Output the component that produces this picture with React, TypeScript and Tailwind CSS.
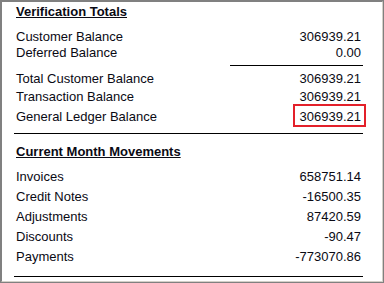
import type { FC } from "react";

const Row: FC<{ label: string; value: string; className?: string }> = ({ label, value, className = "" }) => (
    <div className={`flex h-[16px] leading-[16px] ${className}`}>
        <span className="flex-1 pl-[2px]">{label}</span>
        <span className="pr-[2px] text-right">{value}</span>
    </div>
)

const movements = [
    { label: "Invoices", value: "658751.14" },
    { label: "Credit Notes", value: "-16500.35" },
    { label: "Adjustments", value: "87420.59" },
    { label: "Discounts", value: "-90.47" },
    { label: "Payments", value: "-773070.86" },
]

const App: FC = () => {
    return (
        <div className="w-[384px] h-[283px] bg-white border border-[#808080] text-[13px] text-[#0a0a14]" style={{ fontFamily: '"Liberation Sans", Arial, sans-serif' }}>
            <div className="h-full border-l border-t border-r border-b border-l-[#808080] border-t-[#808080] border-r-[#d4d0c8] border-b-[#d4d0c8] pl-[12px] pr-[19px] pt-[2px]">
                <div className="h-[16px] leading-[16px] pl-[2px] font-bold underline">Verification Totals</div>

                <Row label="Customer Balance" value="306939.21" className="mt-[9px]" />
                <Row label="Deferred Balance" value="0.00" />
                <div className="mt-[4px] h-px w-[133px] ml-auto bg-black" />

                <Row label="Total Customer Balance" value="306939.21" className="mt-[5px]" />
                <Row label="Transaction Balance" value="306939.21" className="mt-[2px]" />
                <div className="flex h-[23px] -mt-px">
                    <span className="flex-1 pl-[2px] pt-[5px] leading-[16px]">General Ledger Balance</span>
                    <span className="-mr-[3px] border-2 border-[#e3202a] pl-[5px] pr-[3px] pt-[3px] leading-[16px]">306939.21</span>
                </div>
                <div className="mt-[6px] h-px bg-black" />

                <div className="mt-[10px] h-[16px] leading-[16px] pl-[2px] font-bold underline">Current Month Movements</div>
                <div className="mt-[9px] flex flex-col gap-[4px]">
                    {movements.map((m) => (
                        <Row key={m.label} label={m.label} value={m.value} />
                    ))}
                </div>
                <div className="mt-[11px] h-px bg-black" />
            </div>
        </div>
    )
}

export default App;
